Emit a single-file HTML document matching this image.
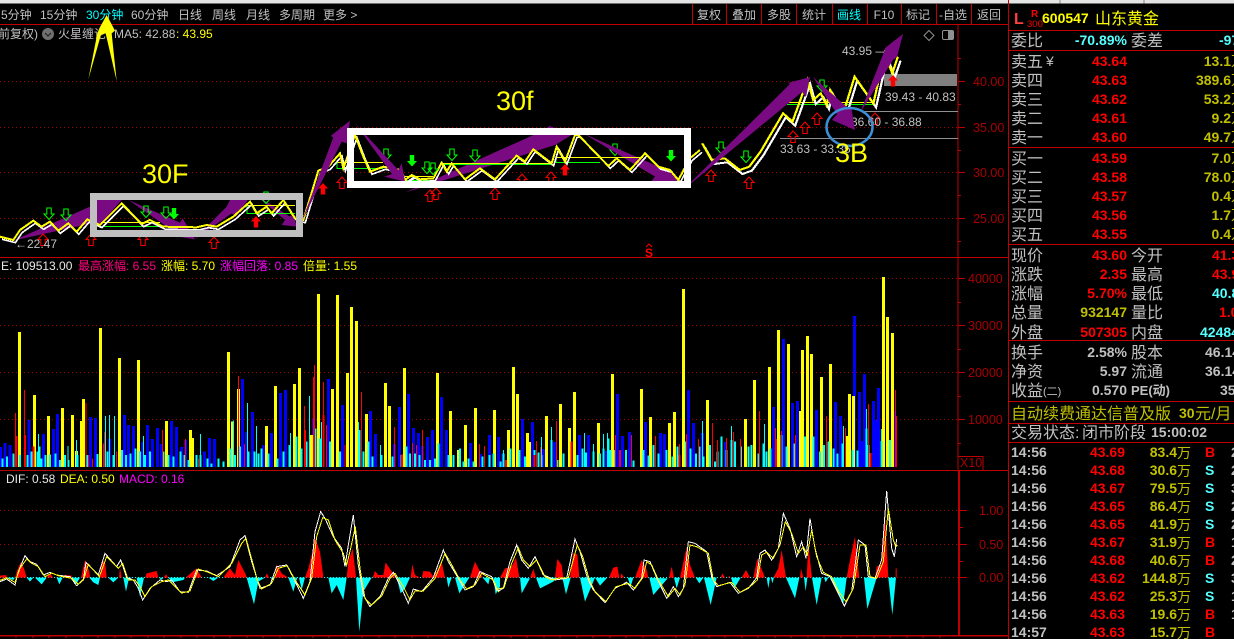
<!DOCTYPE html>
<html><head><meta charset="utf-8"><title>600547</title>
<style>
html,body{margin:0;padding:0;background:#000;width:1234px;height:639px;overflow:hidden}
svg{display:block;position:absolute;left:0;top:0}
text{font-family:"Liberation Sans","Noto Sans CJK SC",sans-serif;font-size:12px;fill:#c0c0c0}
.b{font-weight:bold;font-size:14px}
.l{font-size:16px}
.e{text-anchor:end}
.m{text-anchor:middle}
.ax{fill:#a80000;font-size:12.5px}
.r{fill:#f00}.y{fill:#c0c000}.c{fill:#55ffff}.yy{fill:#ff0}
</style></head><body>
<svg width="1234" height="639" viewBox="0 0 1234 639" xmlns="http://www.w3.org/2000/svg">
<defs>
<path id="u" d="M5 0L10 5.5H7.2V11.5H2.8V5.5H0Z"/>
<path id="d" d="M2.8 0H7.2V6H10L5 11.5L0 6H2.8Z"/>
</defs>
<rect width="1234" height="639" fill="#000"/>
<rect width="1234" height="3.5" fill="#e4e4e4"/>

<!-- toolbar -->
<text x="1" y="19">5分钟</text><text x="40" y="19">15分钟</text><text x="86" y="19" class="c" style="fill:#0ff">30分钟</text><text x="131" y="19">60分钟</text><text x="178" y="19">日线</text><text x="212" y="19">周线</text><text x="246" y="19">月线</text><text x="279" y="19">多周期</text><text x="323" y="19">更多 &gt;</text>
<g stroke="#c00000" stroke-width="1" shape-rendering="crispEdges">
<path d="M692.5 4V24M726.5 4V24M761.5 4V24M796.5 4V24M832.5 4V24M867.5 4V24M901.5 4V24M936.5 4V24M971.5 4V24"/>
</g>
<text x="709" y="19" class="m">复权</text><text x="744" y="19" class="m">叠加</text><text x="779" y="19" class="m">多股</text><text x="814" y="19" class="m">统计</text><text x="849" y="19" class="m" style="fill:#0ff">画线</text><text x="884" y="19" class="m">F10</text><text x="918" y="19" class="m">标记</text><text x="953" y="19" class="m">-自选</text><text x="989" y="19" class="m">返回</text>

<!-- frame lines -->
<g stroke="#c00000" shape-rendering="crispEdges" fill="none">
<path d="M0 24.5H1008M0 257.5H1008M0 470.5H1008" stroke-width="1"/>
<path d="M958 24V470M1008.5 0V639" stroke-width="1"/>
<path d="M0 635.5H1008" stroke-width="1.5"/>
<path d="M959 471V635" stroke-width="2"/>
<path d="M958 456.5H983V470" stroke-width="1"/>
<path d="M958 81.5H965M958 127.5H965M958 172.5H965M958 218.5H965M958 58.5H961M958 104.5H961M958 150.5H961M958 195.5H961M958 241.5H961M958 278.5H965M958 325.5H965M958 372.5H965M958 419.5H965M958 302.5H961M958 349.5H961M958 396.5H961M958 443.5H961M960 510.5H967M960 544.5H967M960 577.5H967M960 527.5H963M960 561.5H963"/>
<path d="M16 635V638M33 635V638M49 635V638M66 635V638M82 635V638M98 635V638M115 635V638M131 635V638M148 635V638M164 635V638M181 635V638M197 635V638M214 635V638M230 635V638M247 635V638M263 635V638M280 635V638M296 635V638M313 635V638M329 635V638M346 635V638M362 635V638M379 635V638M395 635V638M412 635V638M428 635V638M445 635V638M461 635V638M478 635V638M494 635V638M511 635V638M527 635V638M544 635V638M560 635V638M577 635V638M593 635V638M610 635V638M626 635V638M643 635V638M659 635V638M676 635V638M692 635V638M709 635V638M725 635V638M742 635V638M758 635V638M775 635V638M791 635V638M808 635V638M824 635V638M841 635V638M857 635V638M874 635V638M890 635V638M907 635V638M923 635V638M940 635V638"/>
</g>
<!-- dotted grids -->
<g stroke="#a00000" stroke-width="1" stroke-dasharray="1 3" shape-rendering="crispEdges">
<path d="M0 81.5H958M0 127.5H958M0 172.5H958M0 218.5H958M0 278.5H958M0 325.5H958M0 372.5H958M0 419.5H958M0 510.5H958M0 544.5H958M897 577.5H958"/>
</g>
<path d="M0 577.5H897" stroke="#0ff" stroke-width="1" stroke-dasharray="1 2" shape-rendering="crispEdges"/>

<text class="ax" x="973" y="86">40.00</text><text class="ax" x="973" y="132">35.00</text><text class="ax" x="973" y="177">30.00</text><text class="ax" x="973" y="223">25.00</text>
<text class="ax" x="968" y="283">40000</text><text class="ax" x="968" y="330">30000</text><text class="ax" x="968" y="377">20000</text><text class="ax" x="968" y="424">10000</text>
<text class="ax" x="960" y="467">X10</text>
<text class="ax" x="979" y="515">1.00</text><text class="ax" x="979" y="549">0.50</text><text class="ax" x="979" y="582">0.00</text>

<!-- header legends -->
<text x="-2" y="38">前复权)</text>
<circle cx="48" cy="34" r="6" fill="#707070"/><path d="M45 33l3 3 3-3" stroke="#222" stroke-width="1.2" fill="none"/>
<text x="58" y="38">火星缠论</text>
<text x="114" y="38">MA5: 42.88</text><text x="176" y="38" class="yy">: 43.95</text>
<text x="1" y="270" style="fill:#e8e8e8">E: 109513.00</text><text x="78" y="270" style="fill:#ff0080">最高涨幅: 6.55</text><text x="161" y="270" class="yy">涨幅: 5.70</text><text x="220" y="270" style="fill:#f0f">涨幅回落: 0.85</text><text x="303" y="270" class="yy">倍量: 1.55</text>
<text x="6" y="483" style="fill:#e8e8e8">DIF: 0.58</text><text x="60" y="483" class="yy">DEA: 0.50</text><text x="119" y="483" style="fill:#f0f">MACD: 0.16</text>

<!-- gray levels -->
<rect x="884" y="74" width="73" height="12" fill="#808080"/>
<path d="M864 111.5H958M780 138.5H958" stroke="#909090" stroke-width="1" shape-rendering="crispEdges"/>

<!-- purple arrows under the price line -->
<use href="#d" x="610" y="144" fill="none" stroke="#0f0"/>
<g fill="#7a0a82">
<g transform="scale(.33333)">
<polygon points="40,722 285,668 300,675 365,600 285,598 288,612"/>
<polygon points="385,600 540,668 548,655 585,718 505,705 515,690"/>
<polygon points="583,718 695,640 708,650 745,598 690,600 680,620"/>
<polygon points="760,580 870,650 880,640 890,680 845,675 855,660"/>
</g>
<g transform="translate(400,120) scale(.33333)">
<polygon points="15,218 430,32 448,18 520,42 465,75"/>
<polygon points="550,40 798,150 805,145 850,195 745,195 765,170"/>
</g>
</g>

<!-- support lines -->
<g fill="none" stroke-width="1" shape-rendering="crispEdges">
<path stroke="#ff0" d="M101 222.5H160M247 205.5H295M337 162.5H383M405 176.5H433M440 163.5H552M556 157.5H643M787 102.5H873"/>
<path stroke="#0f0" d="M101 226.5H160M247 205.5V213.5H295M337 162.5V168.5H383M405 180.5H433M440 164.5H552M556 157.5V162.5H600M787 104.5H873"/>
</g>

<!-- price lines -->
<g fill="none" shape-rendering="crispEdges">
<g transform="scale(.33333)">
<path d="M0 710L40 720 60 690 100 662 125 680 150 665 175 692 205 670 230 695 262 658 300 675 365 610 425 672 450 660 490 680 590 682 620 675 650 680 700 650 750 605 770 640 800 620 815 640 850 600 885 655 910 660 955 512 985 500 1020 460 1030 505 1065 405 1090 470 1110 515 1150 500 1200 510 1215 540 1240 525 1262 540" stroke="#fff" stroke-width="5" transform="translate(6,8)"/>
<path d="M0 710L40 720 60 690 100 662 125 680 150 665 175 692 205 670 230 695 262 658 300 675 365 610 425 672 450 660 490 680 590 682 620 675 650 680 700 650 750 605 770 640 800 620 815 640 850 600 885 655 910 660 955 512 985 500 1020 460 1030 505 1065 405 1090 470 1110 515 1150 500 1200 510 1215 540 1202 535" stroke="#ff0" stroke-width="6"/>
</g>
<g transform="translate(400,120) scale(.33333)">
<path d="M15 180L35 165 60 178 100 175 125 128 140 155 155 130 195 178 240 145 285 178 350 107 375 125 400 88 455 130 470 80 495 125 525 45 535 45 625 138 650 115 690 150 735 100 775 140 810 150 835 180 870 115 900 90" stroke="#fff" stroke-width="5" transform="translate(6,7)"/>
<path d="M15 180L35 165 60 178 100 175 125 128 140 155 155 130 195 178 240 145 285 178 350 107 375 125 400 88 455 130 470 80 495 125 525 45 535 45 625 138 650 115 690 150 735 100 775 140 810 150 835 180 870 115 900 90" stroke="#ff0" stroke-width="6"/>
</g>
<g transform="translate(420,0) scale(.37628,.33333)">
<path d="M750 430L775 480 810 475 850 510 875 500 905 455 965 340 990 365 1030 240 1045 300 1065 280 1080 315 1090 270 1125 340 1155 230 1205 310 1235 160 1255 220 1270 170" stroke="#fff" stroke-width="6" transform="translate(7,12)"/>
<path d="M750 430L775 480 810 475 850 510 875 500 905 455 965 340 990 365 1030 240 1045 300 1065 280 1080 315 1090 270 1125 340 1155 230 1205 310 1235 160 1255 220 1270 170" stroke="#ff0" stroke-width="6"/>
</g>
</g>

<!-- signal arrows -->
<g fill="none" stroke="#f00" stroke-width="1">
<use href="#u" x="38" y="234"/><use href="#u" x="86" y="234"/><use href="#u" x="138" y="234"/><use href="#u" x="209" y="237"/><use href="#u" x="337" y="177"/><use href="#u" x="425" y="190"/><use href="#u" x="431" y="188"/><use href="#u" x="490" y="188"/><use href="#u" x="517" y="174"/><use href="#u" x="546" y="172"/><use href="#u" x="706" y="170"/><use href="#u" x="744" y="177"/><use href="#u" x="788" y="131"/><use href="#u" x="800" y="122"/><use href="#u" x="812" y="113"/><use href="#u" x="870" y="113"/>
</g>
<g fill="#f00">
<use href="#u" x="251" y="216"/><use href="#u" x="318" y="183"/><use href="#u" x="560" y="164"/><use href="#u" x="888" y="75"/>
</g>
<g fill="none" stroke="#0f0" stroke-width="1">
<use href="#d" x="44" y="208"/><use href="#d" x="61" y="209"/><use href="#d" x="141" y="206"/><use href="#d" x="161" y="207"/><use href="#d" x="261" y="192"/><use href="#d" x="381" y="149"/><use href="#d" x="422" y="162"/><use href="#d" x="428" y="163"/><use href="#d" x="447" y="149"/><use href="#d" x="470" y="150"/><use href="#d" x="716" y="142"/><use href="#d" x="741" y="151"/><use href="#d" x="817" y="80"/>
</g>
<g fill="#0f0">
<use href="#d" x="169" y="208"/><use href="#d" x="407" y="155"/><use href="#d" x="666" y="150"/>
</g>

<!-- chart labels -->
<text x="15" y="248">←22.47</text>
<text x="885" y="101">39.43 - 40.83</text>
<text x="851" y="126">36.60 - 36.88</text>
<text x="780" y="153">33.63 - 33.35</text>
<text x="842" y="55">43.95 —</text>
<text x="649" y="257" class="m r b" style="font-size:12px">S</text><path d="M646 247l3-3 3 3" stroke="#f00" fill="none"/>

<!-- purple arrows above the price line -->
<g fill="#7a0a82">
<g transform="scale(.33333)">
<polygon points="905,665 1025,425 1040,430 1050,362 992,408 1000,412"/>
<polygon points="1065,370 1195,510 1205,490 1215,545 1153,530 1176,522"/>
</g>
<polygon points="683,190 802,92 806,97 810,77 788,83 790,84"/>
<polygon points="813,77 848,108 851,106 855,130 832,120 837,114"/>
<polygon points="860,113 893,60 897,57 903,34 885,48 884,52"/>
</g>

<!-- boxes -->
<rect x="93.5" y="196.5" width="206" height="37" fill="none" stroke="#c0c0c0" stroke-width="7"/>
<rect x="350.5" y="131.5" width="337" height="53" fill="none" stroke="#fff" stroke-width="7"/>
<ellipse cx="849.5" cy="127" rx="23" ry="19" fill="none" stroke="#3a8fd6" stroke-width="2.5"/>
<text x="142" y="183" class="yy" style="font-size:27px">30F</text>
<text x="496" y="110" class="yy" style="font-size:27px">30f</text>
<text x="835" y="162" class="yy" style="font-size:27px">3B</text>

<!-- big yellow arrow -->
<polygon transform="scale(.33333)" fill="#ff0" points="320,45 345,92 335,100 350,243 317,100 303,104 265,238 292,100 298,85"/>

<!-- diamond + panel icon -->
<path d="M929 30.5L934 35.5 929 40.5 924 35.5Z" fill="none" stroke="#909090"/>
<rect x="942.5" y="30.5" width="11" height="9" rx="1.5" fill="none" stroke="#909090"/><rect x="948" y="31" width="5" height="8" fill="#909090"/>

<!-- volume -->
<g fill="none" shape-rendering="crispEdges" transform="translate(0,255) scale(.33333)">
<path stroke="#00f" stroke-width="9" d="M15 564V636M30 570V636M2 576V636M87 495V636M130 537V636M160 522V636M172 477V636M271 486V636M286 489V636M328 552V636M373 480V636M385 510V636M400 513V636M427 561V636M442 510V636M457 552V636M472 519V636M484 567V636M514 498V636M529 516V636M544 576V636M557 555V636M613 590V636M628 549V636M643 552V636M727 372V636M739 531V636M757 471V636M790 570V636M814 534V636M841 414V636M856 405V636M940 489V636M985 372V636M1027 450V636M1111 468V636M1126 537V636M1183 567V636M1198 456V636M1225 417V636M1240 519V636M1255 534V636M1267 573V636M1282 546V636M1297 525V636M1324 426V636M1339 525V636M1411 564V636M1441 597V636M1468 540V636M1495 546V636"/>
<path stroke="#ff0" stroke-width="9" d="M58 231V636M103 420V636M145 483V636M187 459V636M217 480V636M229 588V636M245 498V636M250 432V636M301 219V636M358 309V636M415 315V636M500 498V636M572 525V636M578 549V636M686 291V636M697 500V636M716 402V636M799 513V636M826 393V636M883 387V636M898 339V636M934 540V636M955 117V636M997 402V636M1012 120V636M1042 354V636M1054 156V636M1069 198V636M1099 477V636M1156 384V636M1168 453V636M1213 339V636M1312 354V636M1351 468V636M1375 585V636M1396 510V636M1426 459V636M1483 465V636"/>
<path stroke="#0ff" stroke-width="6" d="M8 610V636M21 605V636M40 595V636M60 600V636M82 600V636M95 590V636M112 590V636M118 575V636M124 610V636M136 600V636M150 598V636M166 595V636M180 615V636M195 600V636M206 615V636M232 600V636M262 600V636M292 597V636M322 590V636M340 600V636M366 585V636M378 600V636M392 595V636M406 580V636M420 590V636M435 600V636M450 590V636M490 590V636M505 600V636M520 605V636M541 590V636M553 600V636M565 615V636M590 600V636M602 600V636M622 610V636M635 625V636M655 610V636M670 620V636M691 580V636M705 600V636M720 575V636M745 590V636M763 590V636M775 595V636M785 580V636M805 595V636M832 610V636M850 590V636M868 570V636M890 545V636M905 580V636M920 560V636M946 520V636M960 550V636M990 560V636M1020 590V636M1078 525V636M1090 590V636M1105 560V636M1118 605V636M1145 600V636M1177 605V636M1204 600V636M1219 575V636M1230 595V636M1245 595V636M1258 600V636M1275 615V636M1290 615V636M1305 610V636M1315 565V636M1345 600V636M1360 600V636M1380 580V636M1390 620V636M1405 610V636M1420 620V636M1447 605V636M1468 600V636M1480 595V636"/>
<path stroke="#0ff" stroke-width="3" d="M115 537V636M204 573V636M229 555V636M316 483V636M328 480V636M343 483V636M430 543V636M602 537V636M700 497V636M742 444V636M769 513V636M871 534V636M928 423V636M964 501V636M1075 501V636M1141 570V636"/>
<path stroke="#f00" stroke-width="3" d="M46 474V636M73 405V636M76 540V636M258 444V636M265 600V636M278 610V636M313 531V636M350 590V636M487 525V636M556 552V636M595 610V636M715 363V636M733 567V636M913 453V636M916 525V636M940 366V636M943 330V636M970 381V636M979 510V636M1035 570V636M1084 411V636M1183 516V636M1237 564V636M1249 570V636M1267 525V636M1438 567V636M1453 573V636"/>
<path stroke="#f00" stroke-width="6" d="M49 543V636M100 575V636M312 565V636M970 480V636M1206 598V636"/>
</g>
<g fill="none" shape-rendering="crispEdges" transform="translate(500,255) scale(.33333)">
<path stroke="#00f" stroke-width="9" d="M9 595V636M67 492V636M97 501V636M130 582V636M163 561V636M238 540V636M265 540V636M319 588V636M352 417V636M367 543V636M388 531V636M436 501V636M481 534V636M493 537V636M565 405V636M580 504V636M607 534V636M676 561V636M820 456V636M850 252V636M877 444V636M892 438V636M949 465V636M1006 441V636M1021 483V636M1063 183V636M1078 411V636M1093 357V636M1120 438V636M1129 495V636M1135 399V636M1084 558V636M1183 468V636"/>
<path stroke="#ff0" stroke-width="9" d="M25 525V636M40 336V636M52 417V636M82 534V636M89 561V636M139 483V636M181 447V636M208 519V636M223 411V636M295 504V636M337 357V636M424 402V636M451 486V636M508 504V636M523 471V636M550 102V636M622 435V636M736 492V636M763 375V636M808 336V636M835 225V636M865 267V636M901 468V636M907 285V636M922 243V636M934 297V636M964 366V636M991 327V636M1048 417V636M1060 423V636M1042 543V636M1150 66V636M1162 186V636M1177 234V636"/>
<path stroke="#0ff" stroke-width="6" d="M2 620V636M10 595V636M32 580V636M58 585V636M75 605V636M103 585V636M115 592V636M124 600V636M154 555V636M172 615V636M190 595V636M232 600V636M247 580V636M258 592V636M280 590V636M300 595V636M310 580V636M325 550V636M331 585V636M345 585V636M378 585V636M400 617V636M430 585V636M445 602V636M460 570V636M475 595V636M500 585V636M517 605V636M533 575V636M558 560V636M572 580V636M588 595V636M598 575V636M610 605V636M630 570V636M645 620V636M652 590V636M665 545V636M680 585V636M694 555V636M705 560V636M723 575V636M745 575V636M755 570V636M775 595V636M790 565V636M800 590V636M812 580V636M845 540V636M860 575V636M883 565V636M915 545V636M940 545V636M960 590V636M972 570V636M985 560V636M1000 580V636M1012 595V636M1028 565V636M1057 585V636M1072 587V636M1100 520V636M1105 570V636M1145 558V636M1170 555V636"/>
<path stroke="#0ff" stroke-width="3" d="M10 585V636M124 546V636M154 516V636M253 534V636M280 567V636M310 537V636M322 534V636M607 498V636M694 513V636M793 507V636M1030 513V636M1099 462V636M1144 522V636"/>
<path stroke="#f00" stroke-width="3" d="M109 558V636M121 576V636M169 498V636M346 540V636M394 540V636M466 543V636M538 567V636M559 537V636M595 552V636M637 504V636M652 555V636M679 549V636M700 531V636M721 552V636M778 468V636M826 519V636M844 528V636M886 540V636M979 483V636M1036 519V636M1105 447V636M1186 405V636M1189 483V636"/>
<path stroke="#f00" stroke-width="6" d="M18 615V636M104 600V636M215 560V636M360 585V636M538 600V636M828 552V636M1112 594V636"/>
</g>

<!-- MACD left -->
<g transform="translate(0,465) scale(.33333)">
<path fill="#f00" d="M0 338V332L18 330 20 338ZM45 338L50 320 62 292 72 310 80 338ZM140 338L150 325 160 338ZM190 338L195 330 215 332V338ZM243 338L255 285 268 320 270 338ZM300 338L305 290 315 288 320 338ZM357 338L360 308 365 338ZM435 338L440 325 470 318 475 338ZM490 338L498 328 505 338ZM557 338L575 322 590 310 605 338ZM670 338L690 310 705 330 715 285 738 330 740 338ZM795 338L800 325 808 338ZM825 338L830 298 845 325 865 338ZM915 338L925 310 940 250 945 218 960 260 968 320 970 338ZM1040 338L1045 290 1058 250 1065 310 1068 338ZM1118 338L1125 318 1135 330 1150 330 1157 292 1175 320 1188 338ZM1232 338L1237 298 1245 330 1260 338ZM1265 338L1270 318 1290 320 1300 335 1310 320 1325 290 1335 338ZM1410 338L1425 290 1440 320 1448 338Z"/>
<path fill="#0ff" d="M20 338L40 345 45 338ZM80 338L90 350 100 338ZM105 338L125 358 140 338ZM170 338L178 358 188 338ZM215 338L228 358 240 338ZM268 338L280 352 295 360 300 338ZM325 338L340 352 355 338ZM370 338L378 380 385 348 395 338ZM410 338L420 395 432 338ZM477 338L485 345 490 338ZM505 338L515 352 550 345 555 338ZM625 338L640 348 655 338ZM740 338L762 418 775 350 795 338ZM812 338L818 345 822 338ZM865 338L880 380 892 338ZM897 338L905 375 915 338ZM985 338L995 385 1010 360 1030 405 1040 338ZM1068 338L1078 500 1090 380 1115 338ZM1190 338L1202 385 1215 370 1230 338ZM1340 338L1345 368 1355 338ZM1365 338L1378 385 1408 338ZM1448 338L1465 358 1470 338ZM1480 338L1487 388 1500 365V338Z"/>
<g fill="none" stroke-width="3" shape-rendering="crispEdges">
<path stroke="#fff" d="M0 350L20 342 45 360 55 320 75 272 90 290 110 298 130 330 150 322 170 330 210 335 230 362 250 345 258 292 295 330 315 265 350 305 362 285 380 338 400 345 415 370 428 405 450 370 480 345 500 350 515 345 540 380 565 382 590 315 620 318 650 332 690 305 720 225 735 212 755 290 770 338 780 370 810 360 830 305 860 300 880 338 910 400 930 350 945 200 962 140 975 160 1000 215 1025 250 1035 305 1045 240 1060 150 1075 300 1090 390 1110 425 1140 395 1165 340 1180 322 1205 370 1225 415 1240 372 1265 380 1300 338 1330 255 1345 290 1375 340 1395 375 1420 365 1440 320 1475 335 1490 375 1500 370"/>
<path stroke="#ff0" d="M0 346L20 338 45 352 60 310 80 282 95 295 115 305 135 335 155 324 175 332 215 340 235 358 252 340 265 298 298 335 320 275 355 310 368 295 385 345 405 345 420 365 435 395 455 365 485 350 505 345 520 360 545 384 570 378 595 312 625 322 655 335 695 295 725 235 738 220 760 300 772 345 785 372 815 355 835 310 862 302 885 345 915 390 935 340 950 215 968 158 985 165 1005 225 1030 265 1040 300 1052 250 1066 185 1080 310 1095 400 1115 420 1145 393 1170 340 1185 325 1210 365 1230 405 1245 378 1270 378 1305 340 1335 265 1350 290 1380 345 1400 372 1425 360 1445 325 1480 345 1495 380 1500 375"/>
</g>
</g>
<!-- MACD right -->
<g transform="translate(500,465) scale(.33333)">
<path fill="#f00" d="M0 338L15 310 35 305 48 278 58 338ZM90 338L100 312 108 338ZM165 338L172 282 185 300 190 338ZM210 338L220 265 232 268 238 338ZM327 338L340 308 352 305 358 338ZM360 338L365 325 372 338ZM405 338L425 285 440 315 445 338ZM507 338L515 305 522 338ZM540 338L560 245 570 300 585 338ZM662 338L667 325 675 338ZM683 338L688 333 692 338ZM725 338L738 315 750 338ZM760 338L772 280 795 338ZM820 338L835 310 845 255 858 338ZM900 338L903 310 910 338ZM920 338L925 240 936 338ZM1040 338L1050 285 1065 215 1078 338ZM1125 338L1130 305 1145 298 1155 150 1165 338ZM1187 338V310H1190V338Z"/>
<path fill="#0ff" d="M60 338L65 385 90 340ZM108 338L120 370 160 350 170 338ZM187 338L198 388 212 338ZM240 338L255 410 285 338ZM285 338L300 362 322 338ZM383 338L392 365 400 338ZM448 338L460 390 503 340ZM522 338L530 370 540 338ZM587 338L598 355 610 338ZM612 338L632 420 650 338ZM693 338L703 370 722 338ZM800 338L805 370 810 338ZM813 338L817 355 822 338ZM858 338L885 400 898 338ZM912 338L917 378 922 338ZM936 338L950 420 965 338ZM972 338L977 352 985 338ZM990 338L1030 415 1040 338ZM1092 338L1102 432 1130 338ZM1165 338L1177 450 1188 338Z"/>
<g fill="none" stroke-width="3" shape-rendering="crispEdges">
<path stroke="#fff" d="M-5 378L10 370 30 290 50 240 65 285 85 310 105 275 130 330 150 338 165 345 200 340 225 222 240 260 262 338 280 375 315 413 345 370 380 352 400 375 425 340 432 285 450 290 470 338 500 400 520 365 535 395 550 370 565 230 585 235 620 260 635 335 650 365 690 352 715 385 745 370 770 338 780 265 795 255 815 285 835 250 850 145 870 190 890 275 905 230 918 280 930 160 945 250 965 325 990 335 1010 375 1033 423 1055 380 1075 225 1095 240 1105 335 1125 340 1145 285 1160 78 1175 250 1183 275 1190 222"/>
<path stroke="#ff0" d="M-5 372L12 368 35 295 55 248 70 285 90 305 110 285 135 335 155 345 172 340 205 338 232 240 248 275 268 345 285 380 318 410 348 365 385 355 405 370 428 338 440 290 455 300 475 345 505 395 525 370 540 390 555 360 570 240 590 245 625 265 640 345 655 362 695 352 720 382 750 365 772 345 785 270 800 262 820 280 840 240 856 170 875 205 895 265 910 245 922 270 935 195 950 275 970 322 995 335 1015 378 1038 410 1060 370 1080 240 1098 240 1110 335 1130 340 1150 290 1165 130 1180 225 1187 245 1192 240"/>
</g>
</g>

<!-- right panel -->
<g stroke="#c00000" stroke-width="1" shape-rendering="crispEdges">
<path d="M1008 30.5H1234M1008 50.5H1234M1008 147.5H1234M1008 244.5H1234M1008 340.5H1234M1008 401.5H1234M1008 423.5H1234M1008 442.5H1234M1004 24.5H1008M1004 470.5H1008M1004 635.5H1008"/>
</g>
<path d="M1060 0V3.5M1144 0V3.5" stroke="#888"/>

<text x="1014" y="24" class="r" style="font-size:16px;fill:#ff4040;font-weight:bold">L</text>
<text x="1031" y="17" class="r b" style="font-size:10px">R</text>
<text x="1027" y="27" class="r" style="font-size:9.5px">300</text>
<text x="1042" y="23" class="yy b">600547</text>
<text x="1095" y="24" class="yy l">山东黄金</text>

<g class="l">
<text class="l" x="1011" y="46">委比</text><text class="l" x="1131" y="46">委差</text>
<text class="l" x="1011" y="67">卖五</text><text class="l" x="1011" y="86">卖四</text><text class="l" x="1011" y="105">卖三</text><text class="l" x="1011" y="124">卖二</text><text class="l" x="1011" y="143">卖一</text>
<text class="l" x="1011" y="164">买一</text><text class="l" x="1011" y="183">买二</text><text class="l" x="1011" y="202">买三</text><text class="l" x="1011" y="221">买四</text><text class="l" x="1011" y="240">买五</text>
<text class="l" x="1011" y="261">现价</text><text class="l" x="1011" y="280">涨跌</text><text class="l" x="1011" y="299">涨幅</text><text class="l" x="1011" y="318">总量</text><text class="l" x="1011" y="338">外盘</text>
<text class="l" x="1131" y="261">今开</text><text class="l" x="1131" y="280">最高</text><text class="l" x="1131" y="299">最低</text><text class="l" x="1131" y="318">量比</text><text class="l" x="1131" y="338">内盘</text>
<text class="l" x="1011" y="358">换手</text><text class="l" x="1011" y="377">净资</text><text class="l" x="1011" y="396">收益</text><text x="1043" y="395" style="font-size:11px">(二)</text>
<text class="l" x="1131" y="358">股本</text><text class="l" x="1131" y="377">流通</text>
</g>
<text x="1046" y="66" style="font-size:14px">¥</text>
<text x="1131" y="395" class="b" style="font-size:13px">PE(动)</text>

<text class="b c e" x="1127" y="45">-70.89%</text><text class="b c" x="1219" y="45">-97</text>

<text class="b r e" x="1127" y="66">43.64</text><text class="b r e" x="1127" y="85">43.63</text><text class="b r e" x="1127" y="104">43.62</text><text class="b r e" x="1127" y="123">43.61</text><text class="b r e" x="1127" y="142">43.60</text>
<text class="b r e" x="1127" y="163">43.59</text><text class="b r e" x="1127" y="182">43.58</text><text class="b r e" x="1127" y="201">43.57</text><text class="b r e" x="1127" y="220">43.56</text><text class="b r e" x="1127" y="239">43.55</text>

<text class="b y e" x="1231" y="66">13.1</text><text class="b y e" x="1231" y="85">389.6</text><text class="b y e" x="1231" y="104">53.2</text><text class="b y e" x="1231" y="123">9.2</text><text class="b y e" x="1231" y="142">49.7</text>
<text class="b y e" x="1231" y="163">7.0</text><text class="b y e" x="1231" y="182">78.0</text><text class="b y e" x="1231" y="201">0.4</text><text class="b y e" x="1231" y="220">1.7</text><text class="b y e" x="1231" y="239">0.4</text>
<g class="y"><text class="y" x="1231" y="66" style="font-size:14px">万</text><text class="y" x="1231" y="85" style="font-size:14px">万</text><text class="y" x="1231" y="104" style="font-size:14px">万</text><text class="y" x="1231" y="123" style="font-size:14px">万</text><text class="y" x="1231" y="142" style="font-size:14px">万</text><text class="y" x="1231" y="163" style="font-size:14px">万</text><text class="y" x="1231" y="182" style="font-size:14px">万</text><text class="y" x="1231" y="201" style="font-size:14px">万</text><text class="y" x="1231" y="220" style="font-size:14px">万</text><text class="y" x="1231" y="239" style="font-size:14px">万</text></g>

<text class="b r e" x="1127" y="260">43.60</text><text class="b r e" x="1127" y="279">2.35</text><text class="b r e" x="1127" y="298">5.70%</text><text class="b y e" x="1127" y="317">932147</text><text class="b r e" x="1127" y="337">507305</text>
<text class="b e" x="1127" y="357">2.58%</text><text class="b e" x="1127" y="376">5.97</text><text class="b e" x="1127" y="395">0.570</text>
<text class="b r" x="1212" y="260">41.38</text><text class="b r" x="1212" y="279">43.95</text><text class="b c" x="1212" y="298">40.83</text><text class="b r" x="1219" y="317">1.08</text><text class="b c" x="1200" y="337">42484</text>
<text class="b" x="1205" y="357">46.14</text><text class="b" x="1205" y="376">36.14</text><text class="b" x="1220" y="395">35.6</text>

<text class="l y" x="1011" y="419">自动续费通达信普及版</text>
<text class="b y" x="1179" y="418">30</text><text class="l y" x="1195" y="419">元/月</text>
<text class="l" x="1011" y="438">交易状态:</text><text class="l" x="1082" y="438">闭市阶段</text><text class="b" x="1151" y="437">15:00:02</text>

<g>
<text class="b" x="1011" y="457">14:56</text><text class="b r e" x="1125" y="457">43.69</text><text class="b y e" x="1177" y="457">83.4</text><text class="y" x="1177" y="458" style="font-size:14px">万</text><text class="b r" x="1205" y="457">B</text><text class="b" x="1231" y="457">2</text>
<text class="b" x="1011" y="475">14:56</text><text class="b r e" x="1125" y="475">43.68</text><text class="b y e" x="1177" y="475">30.6</text><text class="y" x="1177" y="476" style="font-size:14px">万</text><text class="b c" x="1205" y="475">S</text><text class="b" x="1231" y="475">2</text>
<text class="b" x="1011" y="493">14:56</text><text class="b r e" x="1125" y="493">43.67</text><text class="b y e" x="1177" y="493">79.5</text><text class="y" x="1177" y="494" style="font-size:14px">万</text><text class="b c" x="1205" y="493">S</text><text class="b" x="1231" y="493">3</text>
<text class="b" x="1011" y="511">14:56</text><text class="b r e" x="1125" y="511">43.65</text><text class="b y e" x="1177" y="511">86.4</text><text class="y" x="1177" y="512" style="font-size:14px">万</text><text class="b c" x="1205" y="511">S</text><text class="b" x="1231" y="511">2</text>
<text class="b" x="1011" y="529">14:56</text><text class="b r e" x="1125" y="529">43.65</text><text class="b y e" x="1177" y="529">41.9</text><text class="y" x="1177" y="530" style="font-size:14px">万</text><text class="b c" x="1205" y="529">S</text><text class="b" x="1231" y="529">2</text>
<text class="b" x="1011" y="547">14:56</text><text class="b r e" x="1125" y="547">43.67</text><text class="b y e" x="1177" y="547">31.9</text><text class="y" x="1177" y="548" style="font-size:14px">万</text><text class="b r" x="1205" y="547">B</text><text class="b" x="1231" y="547">1</text>
<text class="b" x="1011" y="565">14:56</text><text class="b r e" x="1125" y="565">43.68</text><text class="b y e" x="1177" y="565">40.6</text><text class="y" x="1177" y="566" style="font-size:14px">万</text><text class="b r" x="1205" y="565">B</text><text class="b" x="1231" y="565">2</text>
<text class="b" x="1011" y="583">14:56</text><text class="b r e" x="1125" y="583">43.62</text><text class="b y e" x="1177" y="583">144.8</text><text class="y" x="1177" y="584" style="font-size:14px">万</text><text class="b c" x="1205" y="583">S</text><text class="b" x="1231" y="583">3</text>
<text class="b" x="1011" y="601">14:56</text><text class="b r e" x="1125" y="601">43.62</text><text class="b y e" x="1177" y="601">25.3</text><text class="y" x="1177" y="602" style="font-size:14px">万</text><text class="b c" x="1205" y="601">S</text><text class="b" x="1231" y="601">1</text>
<text class="b" x="1011" y="619">14:56</text><text class="b r e" x="1125" y="619">43.63</text><text class="b y e" x="1177" y="619">19.6</text><text class="y" x="1177" y="620" style="font-size:14px">万</text><text class="b r" x="1205" y="619">B</text><text class="b" x="1231" y="619">1</text>
<text class="b" x="1011" y="637">14:57</text><text class="b r e" x="1125" y="637">43.63</text><text class="b y e" x="1177" y="637">15.7</text><text class="y" x="1177" y="638" style="font-size:14px">万</text><text class="b r" x="1205" y="637">B</text>
</g>
</svg>
</body></html>
